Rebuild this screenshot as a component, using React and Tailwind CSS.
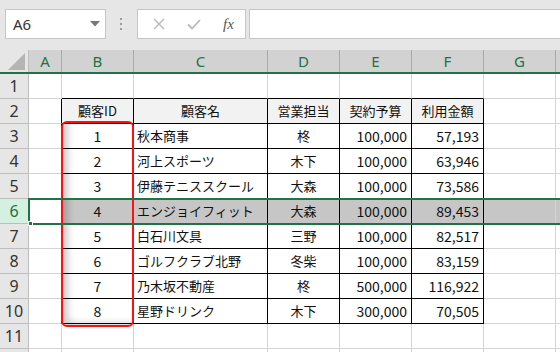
import React from "react";

const cols = [
    { k: "A", w: "w-[33px]" },
    { k: "B", w: "w-[72px]" },
    { k: "C", w: "w-[134px]" },
    { k: "D", w: "w-[72px]" },
    { k: "E", w: "w-[72px]" },
    { k: "F", w: "w-[72px]" },
    { k: "G", w: "w-[72px]" },
    { k: "", w: "w-[72px]" },
];

const data = [
    ["1", "秋本商事", "柊", "100,000", "57,193"],
    ["2", "河上スポーツ", "木下", "100,000", "63,946"],
    ["3", "伊藤テニススクール", "大森", "100,000", "73,586"],
    ["4", "エンジョイフィット", "大森", "100,000", "89,453"],
    ["5", "白石川文具", "三野", "100,000", "82,517"],
    ["6", "ゴルフクラブ北野", "冬柴", "100,000", "83,159"],
    ["7", "乃木坂不動産", "柊", "500,000", "116,922"],
    ["8", "星野ドリンク", "木下", "300,000", "70,505"],
];

const header = ["顧客ID", "顧客名", "営業担当", "契約予算", "利用金額"];
const align = ["justify-center", "justify-start pl-[3px]", "justify-center", "justify-end pr-[4px]", "justify-end pr-[4px]"];

const cellText = (r, c) => {
    if (r === 2 && c >= 1 && c <= 5) return header[c - 1];
    if (r >= 3 && r <= 10 && c >= 1 && c <= 5) return data[r - 3][c - 1];
    return "";
};

const inTable = (r, c) => r >= 2 && r <= 10 && c >= 1 && c <= 5;

const Cell = ({ r, c }) => {
    const col = cols[c];
    const table = inTable(r, c);
    const rightBlack = table || inTable(r, c + 1);
    const bottomBlack = table || inTable(r + 1, c);
    let bg = "bg-white";
    if (r === 6 && c > 0) bg = "bg-[#c6c6c6]";
    if (r === 2 && table) bg = "bg-[#f2f2f2]";
    const text = cellText(r, c);
    const isNum = r >= 3 && (c === 1 || c === 4 || c === 5);
    const al = r === 2 ? "justify-center" : align[c - 1] || "";
    return (
        <div
            className={`${col.w} shrink-0 h-full flex items-center border-r border-b ${rightBlack ? "border-r-black" : "border-r-[#d4d4d4]"} ${bottomBlack ? "border-b-black" : "border-b-[#d4d4d4]"} ${bg} ${al} text-[#111] whitespace-nowrap overflow-hidden ${isNum ? "text-[14px]" : "text-[13px]"}`}
            style={{ fontFamily: '"Noto Sans CJK JP", "Noto Sans", sans-serif' }}
        >
            {text}
        </div>
    );
};

export default function App() {
    const rows = [1, 2, 3, 4, 5, 6, 7, 8, 9, 10, 11, 12];
    return (
        <div className="w-[560px] h-[352px] overflow-hidden bg-white" style={{ fontFamily: '"Noto Sans", sans-serif' }}>
            {/* formula bar */}
            <div className="h-[50px] bg-[#e6e6e6] flex items-start pt-[9px] pl-[5px]">
                <div className="w-[101px] h-[30px] bg-white border border-[#c6c6c6] flex items-center justify-between pl-[7px] pr-[5px]">
                    <span className="text-[15px] text-[#333]">A6</span>
                    <svg width="10" height="6" viewBox="0 0 10 6"><path d="M0 0 H10 L5 5.5 Z" fill="#777" /></svg>
                </div>
                <div className="w-[31px] h-[30px] flex items-center justify-center">
                    <svg width="3" height="12" viewBox="0 0 3 12">
                        <rect x="0" y="0" width="2" height="2" fill="#9a9a9a" />
                        <rect x="0" y="5" width="2" height="2" fill="#9a9a9a" />
                        <rect x="0" y="10" width="2" height="2" fill="#9a9a9a" />
                    </svg>
                </div>
                <div className="w-[109px] h-[30px] bg-white border border-[#c6c6c6] flex items-center">
                    <div className="w-[38px] flex justify-center pl-[4px]">
                        <svg width="12" height="12" viewBox="0 0 12 12"><path d="M1 1 L11 11 M11 1 L1 11" stroke="#b8b8b8" strokeWidth="1.4" /></svg>
                    </div>
                    <div className="w-[36px] flex justify-center">
                        <svg width="14" height="11" viewBox="0 0 14 11"><path d="M1 5.5 L5 9.5 L13 1" stroke="#b8b8b8" strokeWidth="1.8" fill="none" /></svg>
                    </div>
                    <div className="flex-1 flex justify-center">
                        <span className="text-[15px] italic text-[#555]" style={{ fontFamily: '"Liberation Serif", serif' }}>fx</span>
                    </div>
                </div>
                <div className="ml-[3px] flex-1 h-[30px] bg-white border border-[#c6c6c6] border-r-0" />
            </div>

            {/* grid */}
            <div className="relative">
                {/* column headers */}
                <div className="flex h-[24px] border-b-2 border-[#217346]">
                    <div className="w-[29px] shrink-0 bg-[#e6e6e6] border-r border-[#bdbdbd] relative">
                        <svg className="absolute right-[3px] bottom-[2px]" width="17" height="17" viewBox="0 0 17 17"><path d="M17 0 V17 H0 Z" fill="#b4b4b4" /></svg>
                    </div>
                    {cols.map((col, i) => (
                        <div key={i} className={`${col.w} shrink-0 bg-[#d2d2d2] border-r border-[#ababab] flex items-center justify-center text-[15px] text-[#217346]`}>
                            {col.k}
                        </div>
                    ))}
                </div>

                {rows.map((r) => (
                    <div key={r} className="flex h-[25px]">
                        <div
                            className={`w-[29px] shrink-0 border-r border-b border-[#bdbdbd] flex items-center justify-center text-[16px] ${r === 6 ? "bg-[#d3f0e0] text-[#217346]" : "bg-[#e6e6e6] text-[#333]"}`}
                        >
                            {r < 12 ? r : ""}
                        </div>
                        {cols.map((col, c) => (
                            <Cell key={c} r={r} c={c} />
                        ))}
                    </div>
                ))}

                {/* red outline shape */}
                <div className="absolute left-[61px] top-[71px] w-[73px] h-[206px] border-2 border-[#ff1010] rounded-[6px] shadow-[inset_8px_-5px_7px_-3px_rgba(0,0,0,0.2)]" />

                {/* row selection */}
                <div className="absolute left-[28px] top-[148px] w-[540px] h-[27px] border-2 border-r-0 border-[#217346]" />
                <div className="absolute left-[28px] top-[171px] w-[5px] h-[5px] bg-[#217346] border border-white" />
            </div>
        </div>
    );
}
